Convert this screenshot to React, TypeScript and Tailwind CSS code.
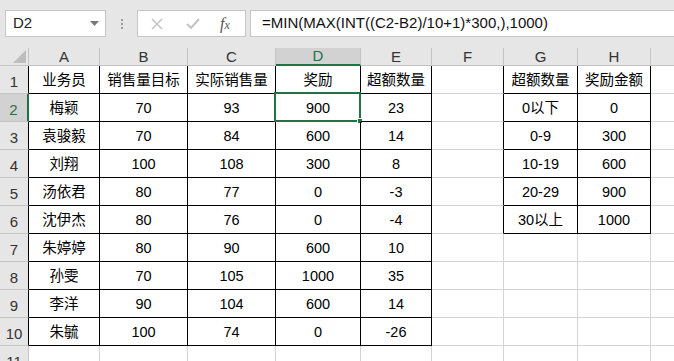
const cols = ["A", "B", "C", "D", "E", "F", "G", "H", ""]

const data: string[][] = [
  ["业务员", "销售量目标", "实际销售量", "奖励", "超额数量", "", "超额数量", "奖励金额", ""],
  ["梅颖", "70", "93", "900", "23", "", "0以下", "0", ""],
  ["袁骏毅", "70", "84", "600", "14", "", "0-9", "300", ""],
  ["刘翔", "100", "108", "300", "8", "", "10-19", "600", ""],
  ["汤依君", "80", "77", "0", "-3", "", "20-29", "900", ""],
  ["沈伊杰", "80", "76", "0", "-4", "", "30以上", "1000", ""],
  ["朱婷婷", "80", "90", "600", "10", "", "", "", ""],
  ["孙雯", "70", "105", "1000", "35", "", "", "", ""],
  ["李洋", "90", "104", "600", "14", "", "", "", ""],
  ["朱毓", "100", "74", "0", "-26", "", "", "", ""],
  ["", "", "", "", "", "", "", "", ""],
]

// true when cell (row 1-based, col 0-based from A) sits inside a bordered table
function inTable(r: number, c: number) {
  if (r >= 1 && r <= 10 && c >= 0 && c <= 4) return true
  if (r >= 1 && r <= 6 && (c === 6 || c === 7)) return true
  return false
}

export default function App() {
  return (
    <div
      className="w-[674px] h-[361px] overflow-hidden bg-white text-black"
      style={{ fontFamily: '"Liberation Sans", "Noto Sans CJK SC", sans-serif' }}
    >
      {/* 编辑栏 */}
      <div className="h-[48px] bg-[#e6e6e6] flex items-start pt-[10px] pl-[5px]">
        <div className="w-[101px] h-[27px] bg-white border border-[#c6c6c6] flex items-center justify-between pl-[7px] pr-[6px] text-[15px] text-[#222]">
          <span>D2</span>
          <svg width="9" height="5" viewBox="0 0 9 5">
            <path d="M0 0h9L4.5 5z" fill="#787878" />
          </svg>
        </div>
        <div className="w-[31px] h-[27px] flex flex-col items-center justify-center gap-[2px]">
          <div className="w-[2px] h-[2px] bg-[#9a9a9a]" />
          <div className="w-[2px] h-[2px] bg-[#9a9a9a]" />
          <div className="w-[2px] h-[2px] bg-[#9a9a9a]" />
        </div>
        <div className="w-[109px] h-[27px] bg-white border border-[#c6c6c6] flex items-center">
          <svg className="ml-[13px]" width="12" height="12" viewBox="0 0 12 12">
            <path d="M1 1l10 10M11 1L1 11" stroke="#c3c3c3" strokeWidth="1.5" fill="none" />
          </svg>
          <svg className="ml-[23px]" width="14" height="11" viewBox="0 0 14 11">
            <path d="M1 6l4 4 8-9" stroke="#c3c3c3" strokeWidth="2" fill="none" />
          </svg>
          <span
            className="ml-[20px] italic text-[16px] text-[#555]"
            style={{ fontFamily: '"Liberation Serif", serif' }}
          >
            f<span className="text-[12px]">x</span>
          </span>
        </div>
        <div className="ml-[4px] flex-1 h-[27px] bg-white border border-r-0 border-[#c6c6c6] flex items-center pl-[11px] text-[15px] text-[#111]">
          =MIN(MAX(INT((C2-B2)/10+1)*300,),1000)
        </div>
      </div>

      {/* 工作表 */}
      <div className="grid grid-cols-[29px_71px_88px_88px_85px_71px_72px_74px_73px_73px] grid-rows-[18px_repeat(11,28px)]">
        {/* 列标题 */}
        <div className="bg-[#e6e6e6] border-r border-b border-[#c4c4c4] flex items-end justify-end p-[2px]">
          <svg width="13" height="13" viewBox="0 0 13 13">
            <path d="M13 0v13H0z" fill="#bdbdbd" />
          </svg>
        </div>
        {cols.map((c, i) =>
          c === "D" ? (
            <div
              key={i}
              className="bg-[#d2d2d2] border-r border-[#c4c4c4] border-b-2 border-b-[#217346] flex items-end justify-center text-[15px] leading-[17px] text-[#217346]"
            >
              {c}
            </div>
          ) : (
            <div
              key={i}
              className="bg-[#e6e6e6] border-r border-b border-[#c4c4c4] flex items-end justify-center text-[15px] leading-[17px] text-[#333]"
            >
              {c}
            </div>
          )
        )}

        {data.map((row, i) => {
          const r = i + 1
          return [
            r === 2 ? (
              <div
                key={`h${r}`}
                className="bg-[#d2d2d2] border-b border-[#c4c4c4] border-r-2 border-r-[#217346] flex items-end justify-center text-[15px] leading-[22px] text-[#217346]"
              >
                {r}
              </div>
            ) : (
              <div
                key={`h${r}`}
                className={
                  "bg-[#e6e6e6] border-b border-[#c4c4c4] border-r flex items-end justify-center text-[15px] leading-[22px] text-[#333] " +
                  (inTable(r, 0) ? "border-r-black" : "border-r-[#c4c4c4]")
                }
              >
                {r}
              </div>
            ),
            ...row.map((v, c) => {
              const right = inTable(r, c) || inTable(r, c + 1)
              const bottom = inTable(r, c) || inTable(r + 1, c)
              return (
                <div
                  key={`${r}-${c}`}
                  className={
                    "relative border-r border-b flex items-center justify-center pt-[3px] text-[14.5px] " +
                    (right ? "border-r-black " : "border-r-[#d4d4d4] ") +
                    (bottom ? "border-b-black" : "border-b-[#d4d4d4]")
                  }
                >
                  {v}
                  {r === 2 && c === 3 && (
                    <div className="absolute -left-[2px] -top-[2px] -right-[1px] -bottom-[1px] border-2 border-[#217346]">
                      <div className="absolute -right-[4px] -bottom-[4px] w-[6px] h-[6px] bg-[#217346] border border-white" />
                    </div>
                  )}
                </div>
              )
            }),
          ]
        })}
      </div>
    </div>
  )
}
